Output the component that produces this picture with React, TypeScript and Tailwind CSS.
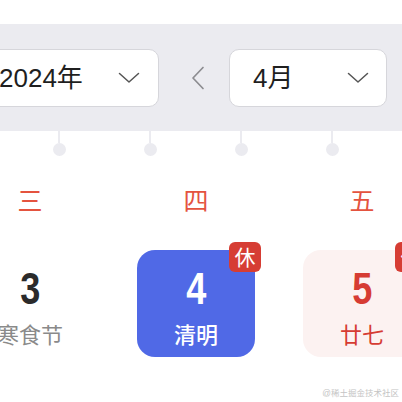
import { ReactNode } from "react";

const FONT = "font-['Liberation_Sans','Noto_Sans_CJK_SC',sans-serif]";
const NUM_FONT = "font-['Liberation_Sans','Noto_Sans_CJK_SC',sans-serif]";

type Day = {
  week: string;
  num: string;
  sub: string;
  kind: "plain" | "selected" | "holiday";
  badge?: boolean;
};

const DAYS: Day[] = [
  { week: "三", num: "3", sub: "寒食节", kind: "plain" },
  { week: "四", num: "4", sub: "清明", kind: "selected", badge: true },
  { week: "五", num: "5", sub: "廿七", kind: "holiday", badge: true },
];

const Chevron = (): ReactNode => (
  <svg width="22" height="12" viewBox="0 0 22 12" fill="none">
    <path d="M1.5 1.5 L11 10 L20.5 1.5" stroke="#555" strokeWidth="1.5" strokeLinecap="round" strokeLinejoin="round" />
  </svg>
);

const Select = ({ label, className }: { label: string; className: string }): ReactNode => (
  <div className={`flex items-center justify-between h-[58px] rounded-[10px] border border-[#d6d6db] bg-white ${className}`}>
    <span className="text-[26px] text-[#1f1f1f] leading-none">{label}</span>
    <Chevron />
  </div>
);

const DayCell = ({ day }: { day: Day }): ReactNode => {
  const bg =
    day.kind === "selected" ? "bg-[#5069e6]" : day.kind === "holiday" ? "bg-[#fcf2f1]" : "bg-transparent";
  const numColor =
    day.kind === "selected" ? "text-white" : day.kind === "holiday" ? "text-[#d63c33]" : "text-[#2b2b2b]";
  const subColor =
    day.kind === "selected" ? "text-white" : day.kind === "holiday" ? "text-[#d63c33]" : "text-[#8a8a8a]";
  return (
    <div className={`relative w-[118px] h-[107px] rounded-[18px] flex flex-col items-center ${bg}`}>
      <span className={`${NUM_FONT} inline-block scale-x-[0.82] font-bold text-[44px] leading-none mt-[17px] ${numColor}`}>
        {day.num}
      </span>
      <span className={`text-[22px] leading-none mt-[14px] ${subColor} ${day.kind === "selected" ? "font-medium" : ""}`}>
        {day.sub}
      </span>
      {day.badge && (
        <span className="absolute -top-[8px] -right-[6px] w-[32px] h-[30px] rounded-[6px] bg-[#d63d34] text-white text-[21px] leading-none flex items-center justify-center">
          休
        </span>
      )}
    </div>
  );
};

const App = (): ReactNode => {
  return (
    <div className={`w-[402px] h-[402px] overflow-hidden bg-white relative ${FONT}`}>
      <div className="h-[24px]" />
      <div className="h-[107px] bg-[#ebebf0] flex items-center">
        <Select label="2024年" className="w-[182px] -ml-[23px] pl-[21px] pr-[18px]" />
        <svg className="ml-[32px]" width="14" height="24" viewBox="0 0 14 24" fill="none">
          <path d="M12 1.5 L2 12 L12 22.5" stroke="#8c8c90" strokeWidth="1.7" strokeLinecap="round" strokeLinejoin="round" />
        </svg>
        <Select label="4月" className="w-[158px] ml-[24px] pl-[23px] pr-[17px]" />
      </div>
      <div className="flex gap-[79px] ml-[53px]">
        {[0, 1, 2, 3].map((i) => (
          <div key={i} className="flex flex-col items-center w-[12px]">
            <div className="w-[2px] h-[12px] bg-[#ebebf0]" />
            <div className="w-[13px] h-[13px] rounded-full bg-[#ebebf0]" />
          </div>
        ))}
      </div>
      <div className="flex -ml-[53px] mt-[33px]">
        {DAYS.map((d) => (
          <div key={d.week} className="w-[166px] shrink-0 flex flex-col items-center">
            <span className="text-[25px] leading-none text-[#e4533f]">{d.week}</span>
            <div className="mt-[36px]">
              <DayCell day={d} />
            </div>
          </div>
        ))}
      </div>
      <span className="absolute right-[3px] bottom-[5px] text-[8.5px] leading-none text-[#c4c4c4]">@稀土掘金技术社区</span>
    </div>
  );
};

export default App;
